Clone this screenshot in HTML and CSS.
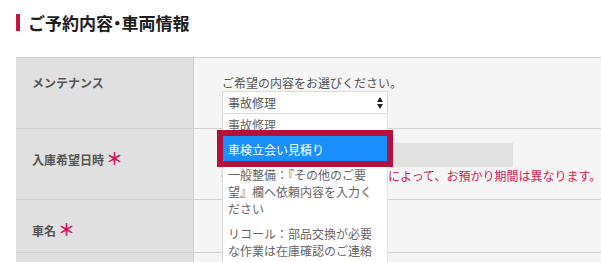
FILE: index.html
```html
<!DOCTYPE html>
<html lang="ja">
<head>
<meta charset="utf-8">
<title>ご予約内容・車両情報</title>
<link rel="stylesheet" href="styles.css">
</head>
<body>
<div class="page">
  <h2 class="section-title">ご予約内容<span class="dot">・</span>車両情報</h2>
  <div class="form-table">
    <div class="row row-maint">
      <div class="label label-first">メンテナンス</div>
      <div class="field field-maint">
        <p class="hint">ご希望の内容をお選びください。</p>
        <div class="select">
          <span>事故修理</span>
          <svg class="arrows" width="6" height="12" viewBox="0 0 6 12"><path d="M0 5 L3 0 L6 5 Z M0 7 L6 7 L3 12 Z" fill="#222"/></svg>
        </div>
        <ul class="options">
          <li class="opt opt-first">事故修理</li>
          <li class="opt opt-active">車検立会い見積り</li>
          <li class="opt">一般整備：『その他のご要望』欄へ依頼内容を入力ください</li>
          <li class="opt">リコール：部品交換が必要な作業は在庫確認のご連絡をさせていただきます</li>
        </ul>
      </div>
    </div>
    <div class="row row-date">
      <div class="label">入庫希望日時<span class="req">＊</span></div>
      <div class="field field-date">
        <div class="input"></div>
        <p class="note">※車検の内容や部品の入荷状況によって、お預かり期間は異なります。</p>
      </div>
    </div>
    <div class="row row-car">
      <div class="label">車名<span class="req">＊</span></div>
      <div class="field"></div>
    </div>
    <div class="row row-more">
      <div class="label"></div>
      <div class="field"></div>
    </div>
  </div>
</div>
</body>
</html>
```
FILE: styles.css
```css
html, body {
  margin: 0;
  padding: 0;
  background: #ffffff;
}
body {
  width: 601px;
  height: 262px;
  overflow: hidden;
  font-family: "Noto Sans CJK JP", "Noto Sans", sans-serif;
}
.page {
  padding: 14px 0 0 16px;
}
.section-title {
  margin: 0;
  border-left: 4px solid #c4163f;
  padding-left: 8px;
  font-size: 17px;
  line-height: 17px;
  font-weight: bold;
  color: #1c1c1c;
}
.dot {
  font-feature-settings: "palt";
}
.form-table {
  margin-top: 26px;
  width: 640px;
}
.row {
  display: grid;
  grid-template-columns: 178px 1fr;
  border-top: 1px solid #d2d2d2;
}
.row-maint { height: 70px; }
.row-date { height: 70px; }
.row-car { height: 52px; }
.row-more { height: 40px; }
.label {
  background: #e0e0e0;
  border-right: 1px solid #d0d0d0;
  padding: 20px 0 0 16px;
  font-size: 12px;
  line-height: 17px;
  font-weight: bold;
  color: #555555;
}
.label-first {
  padding-top: 16px;
}
.req {
  margin-left: 2px;
  font-size: 17px;
  line-height: 17px;
  color: #d4145a;
  font-weight: bold;
}
.field {
  background: #f5f5f5;
  padding-left: 28px;
  font-size: 12px;
  line-height: 17px;
  color: #555555;
}
.field-maint {
  position: relative;
  padding-top: 16px;
}
.hint {
  margin: 0;
  color: #555555;
}
.select {
  box-sizing: border-box;
  width: 166px;
  height: 23px;
  border: 1px solid #dcdcdc;
  background: #ffffff;
  display: flex;
  align-items: center;
  justify-content: space-between;
  padding: 0 4px 0 5px;
  color: #555555;
}
.arrows {
  display: block;
}
.options {
  position: absolute;
  left: 28px;
  top: 56px;
  z-index: 2;
  box-sizing: border-box;
  width: 166px;
  height: 220px;
  margin: 0;
  padding: 0;
  list-style: none;
  background: #ffffff;
  border-left: 1px solid #d8d8d8;
  border-right: 1px solid #e4e4e4;
}
.opt {
  padding: 5px 10px 3px 5px;
  color: #666666;
  font-size: 12px;
  line-height: 17px;
}
.opt-first {
  padding-top: 2px;
}
.opt-active {
  background: #1a8fff;
  color: #ffffff;
  outline: 6px solid #b3113c;
}
.field-date {
  padding-top: 14px;
}
.input {
  width: 291px;
  height: 24px;
  background: #e2e2e2;
}
.note {
  margin: 0;
  white-space: nowrap;
  text-indent: -2px;
  color: #cc1f4f;
}
```
